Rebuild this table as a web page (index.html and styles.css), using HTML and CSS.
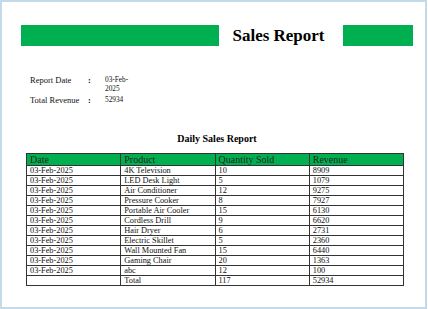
FILE: index.html
```html
<!DOCTYPE html>
<html>
<head>
<meta charset="utf-8">
<link rel="stylesheet" href="styles.css">
</head>
<body>
<div class="page">
  <div class="banner">
    <div class="bar"></div>
    <h1 class="title">Sales Report</h1>
    <div class="bar"></div>
  </div>
  <div class="info">
    <div class="label">Report Date</div><div class="colon">:</div><div class="value">03-Feb-2025</div>
    <div class="label">Total Revenue</div><div class="colon">:</div><div class="value">52934</div>
  </div>
  <h2 class="subtitle">Daily Sales Report</h2>
  <table class="sales">
    <thead>
      <tr><th>Date</th><th>Product</th><th>Quantity Sold</th><th>Revenue</th></tr>
    </thead>
    <tbody>
      <tr><td>03-Feb-2025</td><td>4K Television</td><td>10</td><td>8909</td></tr>
      <tr><td>03-Feb-2025</td><td>LED Desk Light</td><td>5</td><td>1079</td></tr>
      <tr><td>03-Feb-2025</td><td>Air Conditioner</td><td>12</td><td>9275</td></tr>
      <tr><td>03-Feb-2025</td><td>Pressure Cooker</td><td>8</td><td>7927</td></tr>
      <tr><td>03-Feb-2025</td><td>Portable Air Cooler</td><td>15</td><td>6130</td></tr>
      <tr><td>03-Feb-2025</td><td>Cordless Drill</td><td>9</td><td>6620</td></tr>
      <tr><td>03-Feb-2025</td><td>Hair Dryer</td><td>6</td><td>2731</td></tr>
      <tr><td>03-Feb-2025</td><td>Electric Skillet</td><td>5</td><td>2360</td></tr>
      <tr><td>03-Feb-2025</td><td>Wall Mounted Fan</td><td>15</td><td>6440</td></tr>
      <tr><td>03-Feb-2025</td><td>Gaming Chair</td><td>20</td><td>1363</td></tr>
      <tr><td>03-Feb-2025</td><td>abc</td><td>12</td><td>100</td></tr>
      <tr><td></td><td>Total</td><td>117</td><td>52934</td></tr>
    </tbody>
  </table>
</div>
</body>
</html>
```
FILE: styles.css
```css
html, body {
  margin: 0;
  padding: 0;
  background: #ffffff;
}
body {
  font-family: "Liberation Serif", "Times New Roman", serif;
  color: #111;
}
.page {
  box-sizing: border-box;
  width: 427px;
  height: 309px;
  border: 2px solid #c2dae9;
  padding: 23px 0 0 19px;
}
.banner {
  display: grid;
  grid-template-columns: 198px 124px 70px;
  height: 21px;
  align-items: center;
}
.bar {
  height: 21px;
  background: #00b050;
}
.title {
  margin: 0;
  font-size: 17px;
  font-weight: bold;
  text-align: center;
  line-height: 21px;
  color: #000;
  padding-right: 5px;
}
.info {
  display: grid;
  grid-template-columns: 58px 17px 24px;
  margin: 29px 0 0 9px;
  row-gap: 2px;
  align-items: start;
}
.label {
  font-size: 8.5px;
  line-height: 10px;
}
.colon {
  font-size: 8.5px;
  line-height: 10px;
  font-weight: bold;
}
.value {
  font-size: 7.3px;
  line-height: 9px;
}
.subtitle {
  margin: 28px 0 0 0;
  width: 392px;
  text-align: center;
  font-size: 10px;
  line-height: 12px;
  font-weight: bold;
  color: #000;
}
.sales {
  margin: 8px 0 0 5px;
  border-collapse: collapse;
  width: 378px;
  table-layout: fixed;
}
.sales th, .sales td {
  border: 1px solid #333;
  padding: 0 3px;
  text-align: left;
  white-space: nowrap;
  overflow: hidden;
}
.sales th {
  background: #00b050;
  font-weight: normal;
  font-size: 10px;
  line-height: 11px;
  color: #222;
}
.sales td {
  font-size: 8.3px;
  line-height: 9px;
}
```
